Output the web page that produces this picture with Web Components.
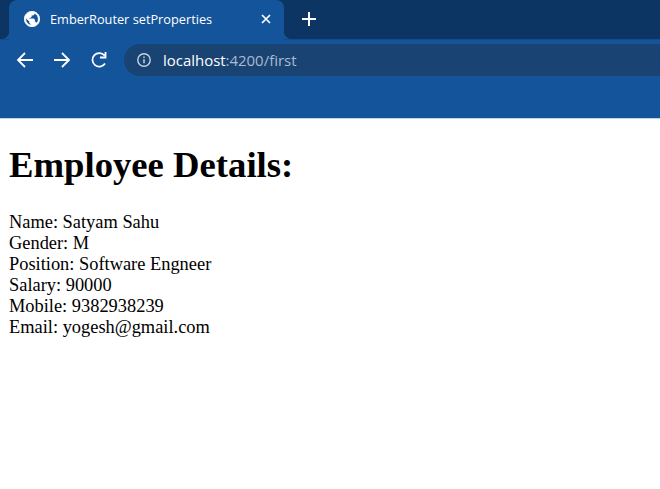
<!DOCTYPE html>
<html>
<head>
<meta charset="utf-8">
<title>EmberRouter setProperties</title>
<style>
	html, body { margin: 0; padding: 0; background: #fff; }
</style>
</head>
<body>
<browser-chrome title-text="EmberRouter setProperties" host="localhost" path=":4200/first"></browser-chrome>
<employee-details>
	<div>Name: Satyam Sahu</div>
	<div>Gender: M</div>
	<div>Position: Software Engneer</div>
	<div>Salary: 90000</div>
	<div>Mobile: 9382938239</div>
	<div>Email: yogesh@gmail.com</div>
</employee-details>

<script>
class BrowserChrome extends HTMLElement {
	constructor() {
		super();
		this.attachShadow({ mode: 'open' });
		this.shadowRoot.innerHTML = `
		<style>
			:host {
				display: block;
				font-family: "Open Sans", "Noto Sans", sans-serif;
				color: #fff;
			}
			.strip {
				height: 40px;
				background: linear-gradient(#0c3563 39px, #184a85 39px);
				display: flex;
				padding-left: 9px;
				align-items: flex-start;
			}
			.tab {
				position: relative;
				width: 275px;
				height: 40px;
				background: #14549a;
				border-radius: 8px 8px 0 0;
				display: flex;
				align-items: center;
				box-sizing: border-box;
				padding: 0 13px 2px 15px;
				font-size: 12.750px;
			}
			.tab::before, .tab::after {
				content: "";
				position: absolute;
				bottom: 1px;
				width: 8px;
				height: 8px;
			}
			.tab::before { left: -8px; background: radial-gradient(circle at 0 0, #0c3563 8px, #14549a 8.5px); }
			.tab::after { right: -8px; background: radial-gradient(circle at 100% 0, #0c3563 8px, #14549a 8.5px); }
			.tab svg.globe { width: 16px; height: 16px; flex: none; margin-right: 10px; }
			.tab span { flex: 1; white-space: nowrap; }
			.tab svg.close { width: 10px; height: 10px; flex: none; }
			.plus { width: 14px; height: 14px; margin: 12px 0 0 18px; flex: none; }
			.toolbar {
				height: 79px;
				background: #14549a;
				box-sizing: border-box;
				padding: 4px 0 0 16px;
				display: flex;
				align-items: flex-start;
				border-bottom: 1px solid #c3d2e5;
			}
			.nav { width: 18px; height: 32px; flex: none; margin-right: 19px; }
			.nav:nth-of-type(3) { margin-right: 16px; }
			.omnibox {
				flex: 1;
				height: 32px;
				background: #194373;
				border-radius: 16px 0 0 16px;
				display: flex;
				align-items: center;
				box-sizing: border-box;
				padding: 0 0 1px 13px;
				font-size: 14.950px;
			}
			.omnibox svg { width: 14px; height: 14px; margin-right: 12px; flex: none; }
			.omnibox em { font-style: normal; color: #a9bbd0; }
		</style>
		<div class="strip">
			<div class="tab">
				<svg class="globe" viewBox="2 2 20 20"><path fill="#fff" stroke="#fff" stroke-width="1.200" d="M12 2.500C6.700 2.500 2.500 6.700 2.500 12s4.200 9.500 9.500 9.500 9.500-4.200 9.500-9.500S17.300 2.500 12 2.500zm-1 17.430c-3.950-.490-7-3.850-7-7.930 0-.620.080-1.210.210-1.790L9 15v1c0 1.100.900 2 2 2v1.930zm6.900-2.540c-.260-.810-1-1.390-1.900-1.390h-1v-3c0-.550-.450-1-1-1H8v-2h2c.550 0 1-.450 1-1V7h2c1.100 0 2-.900 2-2v-.410c2.930 1.190 5 4.060 5 7.410 0 2.080-.800 3.970-2.100 5.390z"/></svg>
				<span>${this.getAttribute('title-text')}</span>
				<svg class="close" viewBox="0 0 10 10"><path d="M1 1l8 8M9 1l-8 8" stroke="#fff" stroke-width="1.700" fill="none"/></svg>
			</div>
			<svg class="plus" viewBox="0 0 14 14"><path d="M7 0v14M0 7h14" stroke="#fff" stroke-width="2" fill="none"/></svg>
		</div>
		<div class="toolbar">
			<svg class="nav" viewBox="0 0 18 32"><path d="M17 16H2M9 9l-7 7 7 7" stroke="#fff" stroke-width="1.800" fill="none"/></svg>
			<svg class="nav" viewBox="0 0 18 32"><path d="M1 16h15M9 9l7 7-7 7" stroke="#fff" stroke-width="1.800" fill="none"/></svg>
			<svg class="nav" viewBox="0 0 18 32"><path d="M15 19.500A6.800 6.800 0 1 1 14.500 11.500M15.500 8v5.500H10" stroke="#fff" stroke-width="1.800" fill="none"/></svg>
			<div class="omnibox">
				<svg viewBox="0 0 14 14"><circle cx="7" cy="7" r="6.200" stroke="#c9d3df" stroke-width="1.400" fill="none"/><path d="M7 6.200v4M7 3.500v1.500" stroke="#c9d3df" stroke-width="1.500"/></svg>
				<span>${this.getAttribute('host')}<em>${this.getAttribute('path')}</em></span>
			</div>
		</div>
		`;
	}
}
customElements.define('browser-chrome', BrowserChrome);

class EmployeeDetails extends HTMLElement {
	constructor() {
		super();
		this.attachShadow({ mode: 'open' });
		this.shadowRoot.innerHTML = `
		<style>
			:host {
				display: block;
				padding: 0 9px;
				font-family: "Liberation Serif", "Times New Roman", serif;
				font-size: 18.400px;
				line-height: 21px;
				color: #000;
			}
			h1 {
				font-size: 36.700px;
				line-height: 43px;
				margin: 24px 0 26px;
			}
		</style>
		<h1>Employee Details:</h1>
		<slot></slot>
		`;
	}
}
customElements.define('employee-details', EmployeeDetails);
</script>
</body>
</html>
